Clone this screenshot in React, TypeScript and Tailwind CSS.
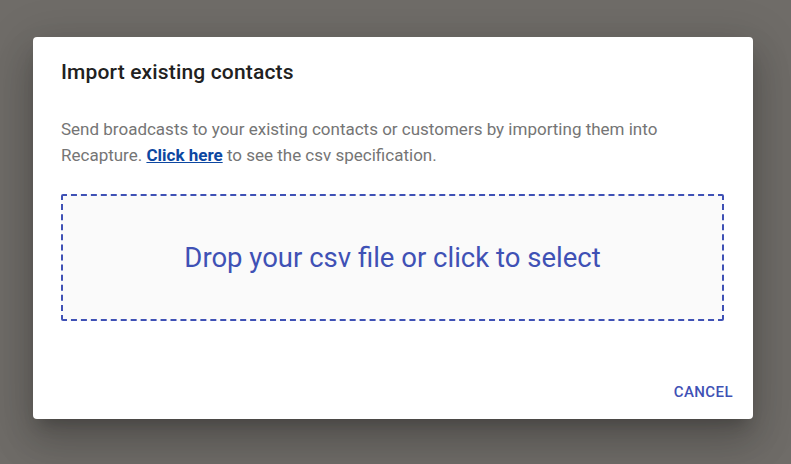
import React from "react";

export default function App() {
  return (
    <div
      className="w-[791px] h-[464px] bg-[#6f6c68] pl-[33px] pt-[37px]"
      style={{ fontFamily: "Roboto, 'Liberation Sans', sans-serif" }}
    >
      <div className="w-[720px] h-[382px] bg-white rounded-[4px] shadow-[0_11px_15px_-7px_rgba(0,0,0,0.2),0_24px_38px_3px_rgba(0,0,0,0.14),0_9px_46px_8px_rgba(0,0,0,0.12)] flex flex-col">
        <div className="px-[28px] pt-[19px]">
          <h2 className="text-[21px] leading-[32px] font-medium text-[#212121] tracking-[0.0075em]">
            Import existing contacts
          </h2>
        </div>
        <div className="pl-[28px] pr-[29px] pt-[28px]">
          <p className="text-[17px] leading-[26px] text-[#757575]">
            Send broadcasts to your existing contacts or customers by importing them into Recapture.{" "}
            <a className="text-[#0d47a1] font-bold underline">Click here</a> to see the csv specification.
          </p>
          <div className="mt-[26px] h-[127px] border-2 border-dashed border-[#3f51b5] rounded-[2px] bg-[#fafafa] flex items-center justify-center">
            <span className="text-[27.5px] text-[#3f51b5]">Drop your csv file or click to select</span>
          </div>
        </div>
        <div className="flex-1" />
        <div className="flex justify-end px-[12px] pb-[9px]">
          <button className="px-[8px] py-[6px] text-[15px] leading-[24px] font-medium uppercase tracking-[0.02857em] text-[#3f51b5]">
            Cancel
          </button>
        </div>
      </div>
    </div>
  );
}
